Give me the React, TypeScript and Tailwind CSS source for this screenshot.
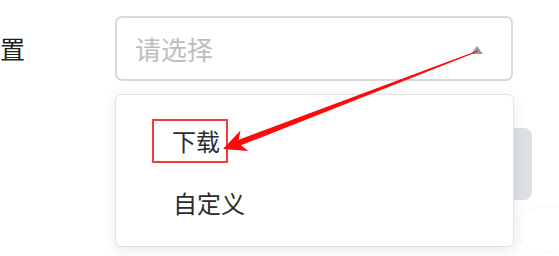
import React from "react";

const font = { fontFamily: '"Noto Sans CJK SC", "Noto Sans", sans-serif' };

export default function App() {
  // arrow geometry
  const tip = [223, 149];
  const start = [478, 51];
  const dx = start[0] - tip[0];
  const dy = start[1] - tip[1];
  const len = Math.hypot(dx, dy);
  const ux = dx / len, uy = dy / len;
  const nx = -uy, ny = ux;
  const p = (d: number, w: number) => [tip[0] + ux * d + nx * w, tip[1] + uy * d + ny * w];
  const head = [tip, p(23, 11), p(18, 3), p(len, 0.6), p(len, -0.6), p(18, -3), p(23, -11)]
    .map((q) => q.map((v) => v.toFixed(1)).join(","))
    .join(" ");

  return (
    <div className="relative w-[559px] h-[256px] overflow-hidden bg-white" style={font}>
      <div className="flex items-start">
        <div className="w-[115px] pt-[30px] text-[25px] leading-[36px] text-[#1f1f1f]">置</div>
        <div className="mt-[16px] w-[398px] h-[65px] rounded-[7px] border-2 border-[#d9d9d9] flex items-center justify-between pl-[18px] pr-[28px]">
          <span className="text-[26px] leading-[36px] text-[#bdbdbd]">请选择</span>
          <span className="w-0 h-0 mt-[3px] border-l-[6px] border-r-[6px] border-b-[8px] border-l-transparent border-r-transparent border-b-[#9a9a9a]" />
        </div>
      </div>
      <div className="flex mt-[47px]">
        <div className="ml-[480px] w-[52px] h-[72px] rounded-r-[8px] bg-[#dcdfe4]" />
      </div>
      <div className="mt-[8px] ml-[520px] w-[40px] h-[42px] rounded-l-[20px] bg-white shadow-[0_0_10px_rgba(0,0,0,0.04)]" />

      <div className="absolute left-[115px] top-[94px] w-[399px] h-[153px] rounded-[6px] border border-[#e2e2e2] bg-white shadow-[0_3px_14px_rgba(0,0,0,0.09)] pt-[24px]">
        <div className="pl-[36px]">
          <span className="inline-block border-2 border-[#f23b3b] pl-[18px] pr-[6px] text-[24px] leading-[40px] text-[#2b2b2b]">下载</span>
        </div>
        <div className="pl-[57px] mt-[26px] text-[24px] leading-[28px] text-[#2b2b2b]">自定义</div>
      </div>

      <svg className="absolute left-0 top-0" width="559" height="256">
        <polygon points={head} fill="#ff0a0a" />
      </svg>
    </div>
  );
}
